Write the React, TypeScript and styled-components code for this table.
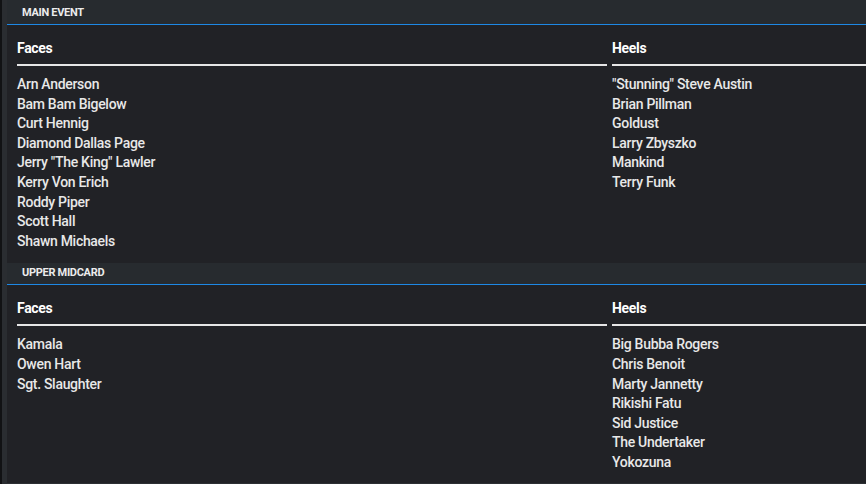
import React from "react";
import styled, { createGlobalStyle } from "styled-components";

const Global = createGlobalStyle`
  html, body { margin: 0; padding: 0; background: #212226; }
  body { font-family: Roboto, "Liberation Sans", sans-serif; color: #e6e6e6; overflow: hidden; }
  * { box-sizing: border-box; }
`;

const Page = styled.div`
  display: flex;
  width: 866px;
  height: 484px;
  overflow: hidden;
  background: #111214;
`;

const Rail = styled.div`
  width: 7px;
  flex: none;
  border-left: 2px solid #111214;
  background: #2a2d31;
`;

const Main = styled.div`
  flex: 1;
  min-width: 0;
  background: #212226;
  border-bottom: 1px solid #2c2f33;
  overflow: hidden;
`;

const Section = styled.section``;

const SectionHeader = styled.div<{ $first?: boolean }>`
  height: ${(p) => (p.$first ? 25 : 22)}px;
  padding: ${(p) => (p.$first ? "6px" : "3px")} 15px 0;
  background: #272b2f;
  border-bottom: 1px solid #1e88e5;
  font-size: 11px;
  font-weight: 700;
  line-height: 14px;
  letter-spacing: -0.3px;
  text-transform: uppercase;
  color: #ececec;
  white-space: nowrap;
`;

const Grid = styled.div`
  display: grid;
  grid-template-columns: 590px 590px;
  column-gap: 5px;
  padding: 13px 0 12px 10px;
`;

const Column = styled.div``;

const ColumnTitle = styled.div`
  font-size: 14px;
  font-weight: 700;
  line-height: 20px;
  letter-spacing: -0.3px;
  color: #ffffff;
  padding-bottom: 6px;
  border-bottom: 2px solid #e6e6e6;
  margin-bottom: 9px;
`;

const List = styled.ul`
  list-style: none;
  margin: 0;
  padding: 0;
`;

const Item = styled.li`
  font-size: 14px;
  font-weight: 500;
  line-height: 19.6px;
  letter-spacing: -0.3px;
  color: #e8e8e8;
  white-space: nowrap;
`;

type Tier = { name: string; faces: string[]; heels: string[] };

const tiers: Tier[] = [
  {
    name: "Main Event",
    faces: [
      "Arn Anderson",
      "Bam Bam Bigelow",
      "Curt Hennig",
      "Diamond Dallas Page",
      'Jerry "The King" Lawler',
      "Kerry Von Erich",
      "Roddy Piper",
      "Scott Hall",
      "Shawn Michaels",
    ],
    heels: [
      '"Stunning" Steve Austin',
      "Brian Pillman",
      "Goldust",
      "Larry Zbyszko",
      "Mankind",
      "Terry Funk",
    ],
  },
  {
    name: "Upper Midcard",
    faces: ["Kamala", "Owen Hart", "Sgt. Slaughter"],
    heels: [
      "Big Bubba Rogers",
      "Chris Benoit",
      "Marty Jannetty",
      "Rikishi Fatu",
      "Sid Justice",
      "The Undertaker",
      "Yokozuna",
    ],
  },
];

export default function App() {
  return (
    <>
      <Global />
      <Page>
        <Rail />
        <Main>
          {tiers.map((t, i) => (
            <Section key={t.name}>
              <SectionHeader $first={i === 0}>{t.name}</SectionHeader>
              <Grid>
                <Column>
                  <ColumnTitle>Faces</ColumnTitle>
                  <List>
                    {t.faces.map((n) => (
                      <Item key={n}>{n}</Item>
                    ))}
                  </List>
                </Column>
                <Column>
                  <ColumnTitle>Heels</ColumnTitle>
                  <List>
                    {t.heels.map((n) => (
                      <Item key={n}>{n}</Item>
                    ))}
                  </List>
                </Column>
              </Grid>
            </Section>
          ))}
        </Main>
      </Page>
    </>
  );
}
